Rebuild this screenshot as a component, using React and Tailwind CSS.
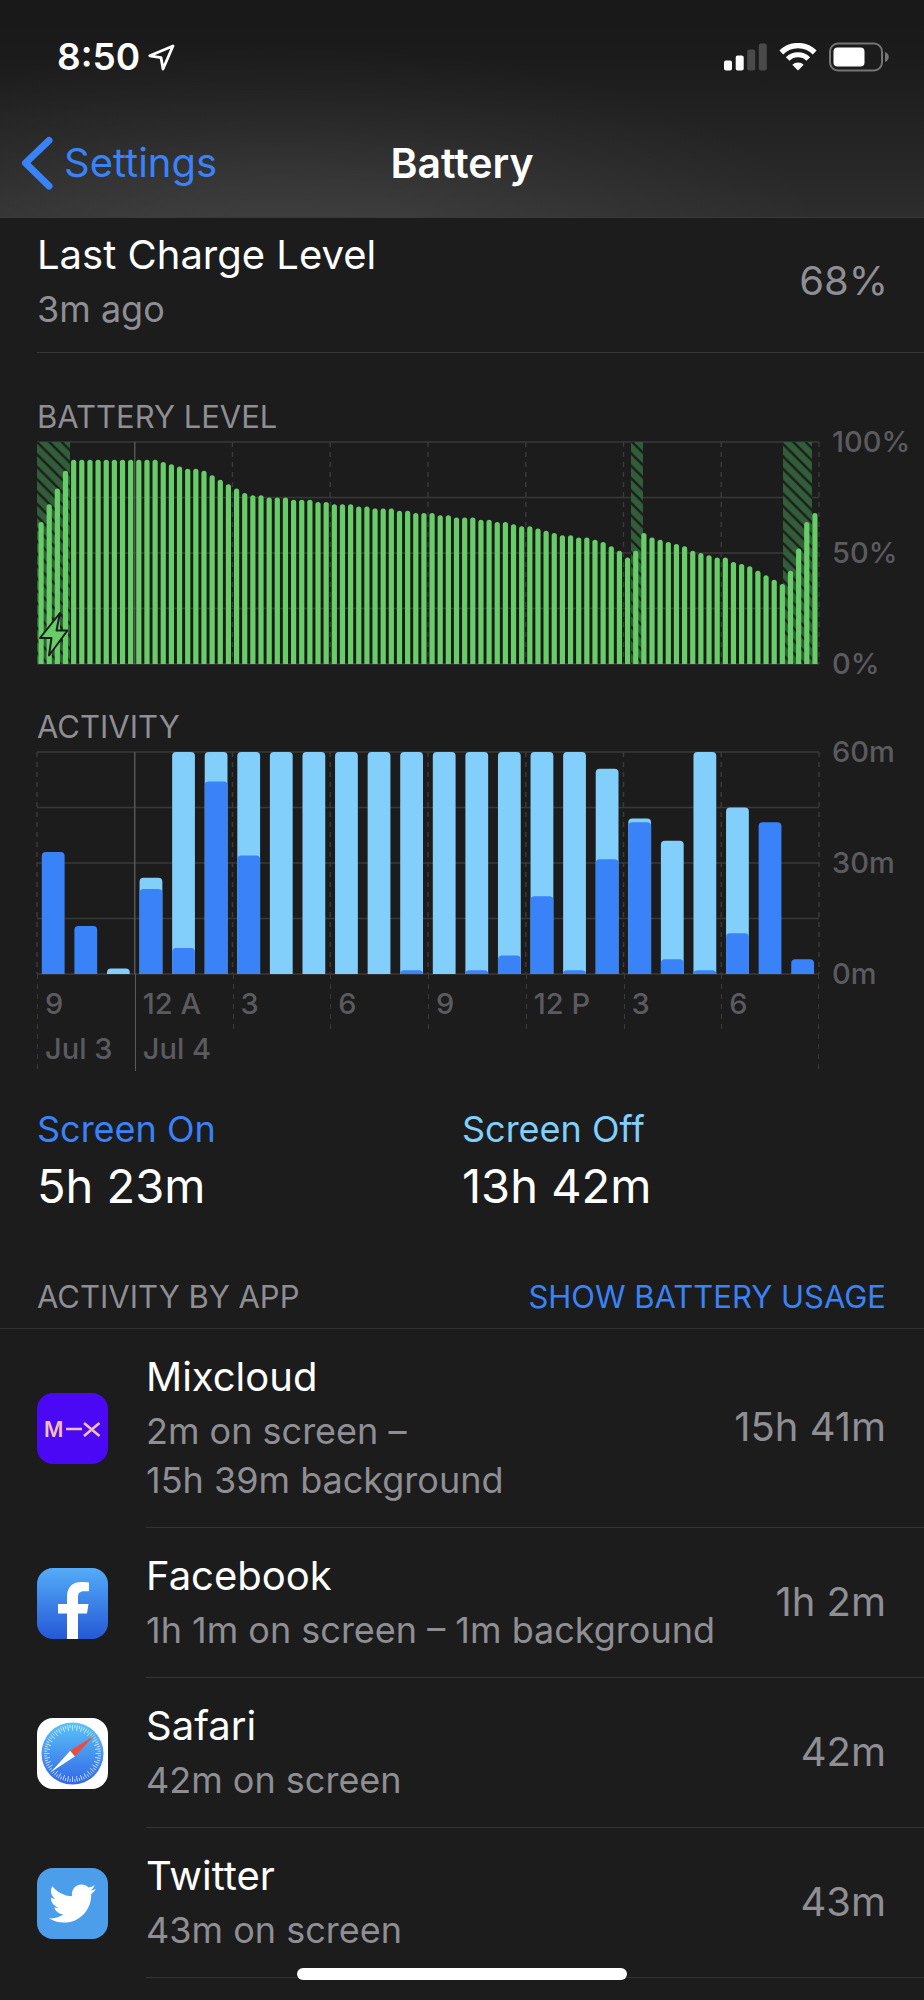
import React from "react";
import { FaTwitter } from "react-icons/fa";

const CHART_W = 782;
const CHART_H = 222;

// one reading per 15 minutes
const batteryLevels = [
  64, 72, 79, 87, 92, 92, 92, 92, 92, 92, 92, 92, 92, 92, 92, 91,
  90, 89, 88, 88, 87, 85, 83, 81, 79, 77, 76, 76, 75, 75, 75, 74,
  74, 74, 73, 73, 72, 72, 72, 71, 71, 70, 70, 70, 69, 69, 68, 68,
  68, 67, 67, 66, 66, 66, 65, 65, 64, 64, 63, 62, 62, 61, 60, 59,
  58, 58, 57, 57, 56, 55, 53, 51, 48, 51, 59, 57, 56, 55, 54, 53,
  51, 50, 49, 48, 48, 46, 45, 44, 42, 40, 38, 36, 42, 52, 64, 68
];

const chargingSpans = [
  { x: 0, width: 33 },
  { x: 594, width: 12 },
  { x: 746, width: 29 }
];

// minutes per hour: total activity and the part with the screen on
const activity = [
  { total: 33, on: 33 },
  { total: 13, on: 13 },
  { total: 1.5, on: 0 },
  { total: 26, on: 23 },
  { total: 60, on: 7 },
  { total: 60, on: 52 },
  { total: 60, on: 32 },
  { total: 60, on: 0 },
  { total: 60, on: 0 },
  { total: 60, on: 0 },
  { total: 60, on: 0 },
  { total: 60, on: 1 },
  { total: 60, on: 0 },
  { total: 60, on: 1 },
  { total: 60, on: 5 },
  { total: 60, on: 21 },
  { total: 60, on: 1 },
  { total: 55.5, on: 31 },
  { total: 42, on: 41 },
  { total: 36, on: 4 },
  { total: 60, on: 1 },
  { total: 45, on: 11 },
  { total: 41, on: 41 },
  { total: 4, on: 4 }
];

const timeTicks = [
  { hour: "9", day: "Jul 3" },
  { hour: "12 A", day: "Jul 4", midnight: true },
  { hour: "3" },
  { hour: "6" },
  { hour: "9" },
  { hour: "12 P" },
  { hour: "3" },
  { hour: "6" }
];

const MixcloudIcon = () => (
  <svg viewBox="0 0 71 71" className="size-[71px]" aria-hidden="true">
    <rect width="71" height="71" rx="16" fill="#4a08f5" />
    <text x="7" y="43.5" fontFamily="Inter, sans-serif" fontSize="21" fontWeight="600" fill="#f3bfb0">
      M
    </text>
    <path d="M29 36H45M47 30L62.500 43M62.500 30L47 43" stroke="#f3bfb0" strokeWidth="2.600" />
  </svg>
);

const FacebookIcon = () => (
  <svg viewBox="0 0 71 71" className="size-[71px]" aria-hidden="true">
    <defs>
      <linearGradient id="fb" x1="0" y1="0" x2="0" y2="1">
        <stop offset="0" stopColor="#54acf8" />
        <stop offset="1" stopColor="#2558d6" />
      </linearGradient>
    </defs>
    <rect width="71" height="71" rx="16" fill="url(#fb)" />
    <path
      d="M30 71V45.500H21V36H30V29C30 18.500 36 14 44.500 14C47.500 14 50 14.200 52 14.500V23.300H47C42.500 23.300 41 25.500 41 29V36H51.500L50 45.500H41V71Z"
      fill="#fff"
    />
  </svg>
);

const SafariIcon = () => (
  <svg viewBox="0 0 71 71" className="size-[71px]" aria-hidden="true">
    <defs>
      <linearGradient id="safari" x1="0" y1="0" x2="0" y2="1">
        <stop offset="0" stopColor="#5ac4f8" />
        <stop offset="1" stopColor="#3266e8" />
      </linearGradient>
    </defs>
    <rect width="71" height="71" rx="16" fill="#fff" />
    <circle cx="35.5" cy="35.5" r="31" fill="url(#safari)" />
    {Array.from({ length: 72 }, (_, i) => (
      <line
        key={i}
        x1="35.5"
        x2="35.5"
        y1="7"
        y2={i % 2 ? 10 : 12.5}
        stroke="#d8ecff"
        strokeWidth="0.8"
        transform={`rotate(${i * 5} 35.5 35.5)`}
      />
    ))}
    <path d="M57.500 17.500L33.200 32.800L37.800 38.600Z" fill="#ee4d3e" />
    <path d="M14 54L33.200 32.800L37.800 38.600Z" fill="#fff" />
  </svg>
);

const TwitterIcon = () => (
  <span className="flex size-[71px] items-center justify-center rounded-2xl bg-[#4c9eeb]">
    <FaTwitter size={47} color="#fff" aria-hidden="true" />
  </span>
);

const apps = [
  { name: "Mixcloud", Icon: MixcloudIcon, usage: ["2m on screen –", "15h 39m background"], time: "15h 41m" },
  { name: "Facebook", Icon: FacebookIcon, usage: ["1h 1m on screen – 1m background"], time: "1h 2m" },
  { name: "Safari", Icon: SafariIcon, usage: ["42m on screen"], time: "42m" },
  { name: "Twitter", Icon: TwitterIcon, usage: ["43m on screen"], time: "43m" }
];

const StatusBar = () => (
  <div className="flex h-[114px] items-center justify-between pl-[57px] pr-[34px]">
    <div className="flex items-center gap-2">
      <span className="text-[37px] font-semibold leading-10">8:50</span>
      <svg width="27" height="27" viewBox="0 0 27 27" fill="none" aria-hidden="true">
        <path d="M25 2L1.800 11.800L13 13.600L15 25Z" stroke="#fff" strokeWidth="2.800" strokeLinejoin="round" />
      </svg>
    </div>
    <div className="flex items-center gap-3">
      <svg width="43" height="28" viewBox="0 0 43 28" aria-hidden="true">
        <rect x="0" y="17.500" width="8" height="10" rx="2" fill="#fff" />
        <rect x="11.700" y="12.500" width="8" height="15" rx="2" fill="#fff" />
        <rect x="23.200" y="6.500" width="8" height="21" rx="2" fill="#4a4a4a" />
        <rect x="34.800" y="0.500" width="8" height="27" rx="2" fill="#4a4a4a" />
      </svg>
      <svg width="38" height="28" viewBox="0 0 38 28" fill="none" aria-hidden="true">
        <path d="M2.300 9.500A23.600 23.600 0 0 1 35.700 9.500" stroke="#fff" strokeWidth="5.400" />
        <path d="M8.700 16A14.600 14.600 0 0 1 29.300 16" stroke="#fff" strokeWidth="5.200" />
        <path d="M19 27.500L13.300 21.800A8 8 0 0 1 24.700 21.800Z" fill="#fff" />
      </svg>
      <svg width="61" height="30" viewBox="0 0 61 30" fill="none" aria-hidden="true">
        <rect x="1" y="1.500" width="52" height="27" rx="8" stroke="#757575" strokeWidth="2" />
        <rect x="4.500" y="5.500" width="31" height="19" rx="4" fill="#fff" />
        <path d="M56 10C61 11.500 61 18.500 56 20Z" fill="#757575" />
      </svg>
    </div>
  </div>
);

const Header = () => (
  <header className="border-b border-[#3a3a3b] bg-[radial-gradient(ellipse_60%_95%_at_30%_115%,#ffffff16_0%,#ffffff12_30%,#ffffff08_65%,#ffffff00_100%),linear-gradient(#191919_10%,#1d1d1d_35%,#2d2d2d_100%)]">
    <StatusBar />
    <div className="grid h-[103px] grid-cols-[1fr_auto_1fr] items-start px-[21px] pt-[22px] text-[40px] leading-[54px]">
      <a href="#settings" className="flex items-center gap-[11px] text-[#3a82f7]">
        <svg width="32" height="54" viewBox="0 0 32 54" fill="none" aria-hidden="true">
          <path d="M28 4.500L4.500 27L28 50" stroke="currentColor" strokeWidth="7" strokeLinecap="round" strokeLinejoin="round" />
        </svg>
        <span>Settings</span>
      </a>
      <h1 className="text-[41px] font-semibold">Battery</h1>
    </div>
  </header>
);

const HorizontalGrid = () =>
  [0, 1, 2, 3, 4].map((i) => (
    <line key={i} x1="0" x2={CHART_W} y1={(i * CHART_H) / 4} y2={(i * CHART_H) / 4} stroke="#38383a" strokeWidth="1.4" />
  ));

const VerticalGrid = ({ from = 0 }) =>
  Array.from({ length: 9 }, (_, i) => i)
    .filter((i) => i >= from)
    .map((i) => {
      const x = (i * CHART_W) / 8;
      return (
        <line
          key={i}
          x1={x}
          x2={x}
          y1="0"
          y2={CHART_H}
          stroke={i === 1 ? "#5a5a5c" : "#3a3a3c"}
          strokeWidth="1.4"
          strokeDasharray={i === 1 ? undefined : "5 5"}
        />
      );
    });

const BatteryChart = () => {
  const pitch = CHART_W / batteryLevels.length;
  return (
    <svg viewBox={`0 0 ${CHART_W} ${CHART_H}`} className="block w-full overflow-visible" role="img" aria-label="Battery level">
      <defs>
        <pattern id="hatch" width="12.4" height="12.4" patternUnits="userSpaceOnUse">
          <rect width="12.4" height="12.4" fill="#315e38" />
          <path d="M-3.100 -3.100L15.500 15.500M-3.100 9.300L3.100 15.500M9.300 -3.100L15.500 3.100" stroke="#1c1c1d" strokeWidth="2.400" />
        </pattern>
      </defs>
      <HorizontalGrid />
      <VerticalGrid from={1} />
      {chargingSpans.map((span) => (
        <rect key={span.x} x={span.x} y="0" width={span.width} height={CHART_H} fill="url(#hatch)" />
      ))}
      {batteryLevels.map((level, i) => {
        const x = (i + 0.5) * pitch;
        const top = CHART_H - (level / 100) * CHART_H;
        return (
          <path
            key={i}
            d={`M${x - 2.6} ${CHART_H}V${top + 2.6}a2.6 2.6 0 0 1 5.2 0V${CHART_H}Z`}
            fill="#67ce67"
          />
        );
      })}
      <path
        d="M23 171L3 196H14.500L12 213.500L30.500 188.500H19.500Z"
        fill="#67ce67"
        stroke="#1c1c1d"
        strokeWidth="2"
        strokeLinejoin="round"
      />
    </svg>
  );
};

const roundedBar = (x, minutes) => {
  const h = (minutes / 60) * CHART_H;
  const r = Math.min(4, h);
  return `M${x} ${CHART_H}V${CHART_H - h + r}a4 ${r} 0 0 1 4 ${-r}h14.800a4 ${r} 0 0 1 4 ${r}V${CHART_H}Z`;
};

const ActivityChart = () => {
  const pitch = CHART_W / activity.length;
  return (
    <svg viewBox={`0 0 ${CHART_W} ${CHART_H}`} className="block w-full overflow-visible" role="img" aria-label="Activity">
      <HorizontalGrid />
      <VerticalGrid />
      {activity.map(({ total, on }, i) => {
        const x = i * pitch + 4.8;
        return (
          <g key={i}>
            {total > on && <path d={roundedBar(x, total)} fill="#81cffa" />}
            {on > 0 && <path d={roundedBar(x, on)} fill="#3a82f7" />}
          </g>
        );
      })}
    </svg>
  );
};

const AxisLabels = ({ labels }) => (
  <div className="-my-5 flex w-[105px] shrink-0 flex-col justify-between pl-[13px] text-[29px] font-medium leading-10 text-[#5b5b5f]">
    {labels.map((label) => (
      <span key={label}>{label}</span>
    ))}
  </div>
);

const DashedLine = ({ className }) => (
  <span
    className={`absolute top-0 w-px bg-[repeating-linear-gradient(#3a3a3c_0_5px,transparent_5px_10px)] ${className}`}
  />
);

const TimeAxis = () => (
  <div className="relative mr-[105px] grid h-[95px] grid-cols-8 text-[29px] font-medium leading-[45px] text-[#5b5b5f]">
    {timeTicks.map((tick, i) => (
      <div key={i} className="relative whitespace-nowrap pl-2 pt-[7px]">
        {tick.midnight ? (
          <span className="absolute left-0 top-0 h-full w-px bg-[#5a5a5c]" />
        ) : (
          <DashedLine className={tick.day ? "left-0 h-full" : "left-0 h-[55px]"} />
        )}
        <p>{tick.hour}</p>
        {tick.day && <p>{tick.day}</p>}
      </div>
    ))}
    <DashedLine className="right-0 h-full" />
  </div>
);

const SectionTitle = ({ children }) => (
  <h2 className="text-[31px] leading-10 text-[#8e8e93]">{children}</h2>
);

const AppRow = ({ app }) => (
  <li className="flex pl-[37px]">
    <div className="flex w-[109px] shrink-0 items-center">
      <app.Icon />
    </div>
    <div className="flex flex-1 items-center justify-between border-b border-[#343436] pb-[22px] pr-[38px] pt-5">
      <div>
        <h3 className="text-[40px] leading-[56px]">{app.name}</h3>
        <div className="mt-0.5 text-[36px] leading-[49px] text-[#8e8e93]">
          {app.usage.map((line) => (
            <p key={line}>{line}</p>
          ))}
        </div>
      </div>
      <span className="whitespace-nowrap text-[40px] leading-[56px] text-[#8e8e93]">{app.time}</span>
    </div>
  </li>
);

const App = () => {
  return (
    <div className="min-h-screen bg-[#1c1c1d] font-[Inter,sans-serif] text-white">
      <Header />

      <main>
        {/* Last charge */}
        <section className="ml-[37px] flex items-center justify-between border-b border-[#38383a] pb-[18px] pr-9 pt-[9px]">
          <div>
            <h2 className="text-[40px] leading-[56px]">Last Charge Level</h2>
            <p className="mt-0.5 text-[36px] leading-[49px] text-[#8e8e93]">3m ago</p>
          </div>
          <span className="text-[40px] leading-[56px] text-[#8e8e93]">68%</span>
        </section>

        {/* Charts */}
        <section className="pl-[37px] pt-11">
          <SectionTitle>BATTERY LEVEL</SectionTitle>
          <div className="mt-[5px] flex">
            <div className="flex-1">
              <BatteryChart />
            </div>
            <AxisLabels labels={["100%", "50%", "0%"]} />
          </div>
        </section>

        <section className="pl-[37px] pt-[43px]">
          <SectionTitle>ACTIVITY</SectionTitle>
          <div className="mt-[5px] flex">
            <div className="flex-1">
              <ActivityChart />
            </div>
            <AxisLabels labels={["60m", "30m", "0m"]} />
          </div>
          <TimeAxis />
        </section>

        {/* Totals */}
        <section className="grid grid-cols-2 px-[37px] pt-9">
          <div>
            <p className="text-[36px] leading-[48px] text-[#3a82f7]">Screen On</p>
            <p className="text-[47px] leading-[66px]">5h 23m</p>
          </div>
          <div>
            <p className="text-[36px] leading-[48px] text-[#81cffa]">Screen Off</p>
            <p className="text-[47px] leading-[66px]">13h 42m</p>
          </div>
        </section>

        {/* Apps */}
        <section className="pt-[58px]">
          <div className="flex items-center justify-between border-b border-[#303032] pb-[11px] pl-[37px] pr-[38px]">
            <SectionTitle>ACTIVITY BY APP</SectionTitle>
            <button type="button" className="text-[31px] leading-10 text-[#3a82f7]">
              SHOW BATTERY USAGE
            </button>
          </div>
          <ul>
            {apps.map((app) => (
              <AppRow key={app.name} app={app} />
            ))}
          </ul>
        </section>
      </main>

      {/* Home indicator */}
      <div className="fixed bottom-5 left-1/2 h-3 w-[330px] -translate-x-1/2 rounded-full bg-white" />
    </div>
  );
};

export default App;
